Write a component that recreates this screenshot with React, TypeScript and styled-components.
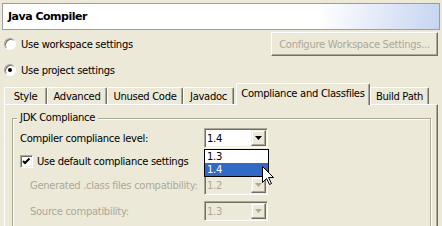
import styled, { createGlobalStyle } from "styled-components";

const GlobalStyle = createGlobalStyle`
  html, body {
    margin: 0;
    padding: 0;
    background: #ece9d8;
  }
  body {
    font-family: "DejaVu Sans", Verdana, sans-serif;
    font-size: 10px;
    letter-spacing: -0.3px;
    color: #000;
  }
`;

const tabs = [
  { label: "Style", width: 43 },
  { label: "Advanced", width: 60 },
  { label: "Unused Code", width: 76 },
  { label: "Javadoc", width: 51 },
  { label: "Compliance and Classfiles", width: 134, active: true },
  { label: "Build Path", width: 59 },
];

const App = () => {
  return (
    <Page>
      <GlobalStyle />
      <TitleBox>Java Compiler</TitleBox>

      <ScopeRow $height={24} $top={2}>
        <RadioLabel>
          <Radio />
          Use workspace settings
        </RadioLabel>
        <PushButton disabled>Configure Workspace Settings...</PushButton>
      </ScopeRow>
      <ScopeRow $height={20} $top={4}>
        <RadioLabel>
          <Radio $checked />
          Use project settings
        </RadioLabel>
      </ScopeRow>

      <TabStrip>
        {tabs.map((tab) => (
          <Tab key={tab.label} $width={tab.width} $active={tab.active}>
            {tab.label}
          </Tab>
        ))}
      </TabStrip>

      <Panel>
        <Group>
          <Legend>JDK Compliance</Legend>
          <GroupBody>
            <FieldRow $height={20}>
              <FieldLabel>Compiler compliance level:</FieldLabel>
              <Combo>
                <ComboText>1.4</ComboText>
                <ArrowButton>
                  <DownArrow />
                </ArrowButton>
                <DropList>
                  <DropItem>1.3</DropItem>
                  <DropItem $selected>1.4</DropItem>
                </DropList>
              </Combo>
            </FieldRow>
            <FieldRow $height={27}>
              <CheckLabel>
                <CheckBox>
                  <svg width="9" height="9" viewBox="0 0 9 9">
                    <path d="M1 4 L3 6 L7.5 1.5" stroke="#000" strokeWidth="2" fill="none" />
                  </svg>
                </CheckBox>
                Use default compliance settings
              </CheckLabel>
            </FieldRow>
            <FieldRow $height={20}>
              <FieldLabel $disabled $indent={10}>
                Generated .class files compatibility:
              </FieldLabel>
              <Combo $disabled>
                <ComboText>1.2</ComboText>
                <ArrowButton>
                  <DownArrow $disabled />
                </ArrowButton>
              </Combo>
            </FieldRow>
            <FieldRow $height={20} $top={6}>
              <FieldLabel $disabled $indent={10}>
                Source compatibility:
              </FieldLabel>
              <Combo $disabled>
                <ComboText>1.3</ComboText>
                <ArrowButton>
                  <DownArrow $disabled />
                </ArrowButton>
              </Combo>
            </FieldRow>
          </GroupBody>
        </Group>
      </Panel>

      <Cursor width="13" height="20" viewBox="0 0 13 20">
        <path
          d="M0.5 0.5 L0.5 16.5 L4.5 12.5 L7.5 18.5 L9.5 17.5 L6.5 11.5 L11.5 11.5 Z"
          fill="#fff"
          stroke="#000"
          strokeWidth="1"
        />
      </Cursor>
    </Page>
  );
};

const DownArrow = ({ $disabled }: { $disabled?: boolean }) => (
  <svg width="7" height="4" viewBox="0 0 7 4">
    <polygon points="0,0 7,0 3.5,4" fill={$disabled ? "#aca899" : "#000"} />
  </svg>
);

export default App;

const Page = styled.div`
  position: relative;
  width: 442px;
  height: 226px;
  overflow: hidden;
  background: #ece9d8;
`;

const TitleBox = styled.div`
  margin: 3px 2px 0;
  height: 25px;
  border: 1px solid #9d9da1;
  padding-left: 5px;
  display: flex;
  align-items: center;
  font-weight: bold;
  font-size: 11px;
  letter-spacing: -0.5px;
  background: linear-gradient(100deg, #fff 0%, #fff 72%, #c6d5f1 100%);
`;

const ScopeRow = styled.div<{ $height: number; $top: number }>`
  display: flex;
  align-items: center;
  justify-content: space-between;
  height: ${(p) => p.$height}px;
  margin-top: ${(p) => p.$top}px;
  padding: 0 4px 0 4px;
`;

const RadioLabel = styled.label`
  display: flex;
  align-items: center;
  gap: 5px;
`;

const Radio = styled.span<{ $checked?: boolean }>`
  position: relative;
  width: 12px;
  height: 12px;
  box-sizing: border-box;
  border-radius: 50%;
  border: 1px solid;
  border-color: #aca899 #fff #fff #aca899;
  box-shadow: inset 1px 1px 0 #716f64;
  background: #fff;

  &::after {
    content: "";
    display: ${(p) => (p.$checked ? "block" : "none")};
    position: absolute;
    left: 3px;
    top: 3px;
    width: 4px;
    height: 4px;
    border-radius: 50%;
    background: #000;
  }
`;

const PushButton = styled.button`
  width: 167px;
  height: 24px;
  box-sizing: border-box;
  padding: 0;
  border: 1px solid;
  border-color: #fff #716f64 #716f64 #fff;
  box-shadow: inset -1px -1px 0 #aca899;
  background: #ece9d8;
  color: #aca899;
  font: inherit;
  letter-spacing: inherit;
`;

const TabStrip = styled.div`
  position: relative;
  z-index: 1;
  display: flex;
  align-items: flex-end;
  height: 21px;
  margin-top: 3px;
  padding-left: 4px;
`;

const Tab = styled.div<{ $width: number; $active?: boolean }>`
  width: ${(p) => p.$width}px;
  height: ${(p) => (p.$active ? 22 : 17)}px;
  margin-left: ${(p) => (p.$active ? 2 : 0)}px;
  margin-bottom: ${(p) => (p.$active ? -1 : 0)}px;
  padding-bottom: ${(p) => (p.$active ? 2 : 0)}px;
  box-sizing: border-box;
  display: flex;
  align-items: center;
  justify-content: center;
  white-space: nowrap;
  background: #ece9d8;
  border-top: 1px solid #fff;
  border-left: 1px solid #fff;
  border-right: 1px solid #716f64;
  border-radius: 2px 2px 0 0;
  box-shadow: inset -1px 0 0 #aca899;
`;

const Panel = styled.div`
  margin: 0 4px;
  height: 122px;
  box-sizing: border-box;
  padding: 7px 6px 0 7px;
  border-top: 1px solid #fff;
  border-left: 1px solid #fff;
  border-right: 1px solid #716f64;
  box-shadow: inset -1px 0 0 #aca899;
`;

const Group = styled.fieldset`
  margin: 0;
  padding: 0 0 0 4px;
  min-width: 0;
  height: 130px;
  border: 1px solid #aca899;
  box-shadow: inset 1px 1px 0 #fff, 1px 1px 0 #fff;
`;

const Legend = styled.legend`
  padding: 0 3px;
  line-height: 12px;
  background: #ece9d8;
`;

const GroupBody = styled.div`
  padding: 4px 0 0 3px;
`;

const FieldRow = styled.div<{ $height: number; $top?: number }>`
  display: flex;
  align-items: center;
  height: ${(p) => p.$height}px;
  margin-top: ${(p) => p.$top ?? 0}px;
`;

const FieldLabel = styled.span<{ $disabled?: boolean; $indent?: number }>`
  width: 184px;
  flex-shrink: 0;
  box-sizing: border-box;
  padding-left: ${(p) => p.$indent ?? 0}px;
  color: ${(p) => (p.$disabled ? "#aca899" : "#000")};
  white-space: nowrap;
`;

const Combo = styled.div<{ $disabled?: boolean }>`
  position: relative;
  width: 64px;
  height: 20px;
  box-sizing: border-box;
  display: flex;
  align-items: center;
  border: 1px solid;
  border-color: #aca899 #fff #fff #aca899;
  box-shadow: inset 1px 1px 0 #716f64, inset -1px -1px 0 #f1efe2;
  background: ${(p) => (p.$disabled ? "#ece9d8" : "#fff")};
  color: ${(p) => (p.$disabled ? "#aca899" : "#000")};
`;

const ComboText = styled.span`
  flex: 1;
  padding-left: 2px;
`;

const ArrowButton = styled.span`
  width: 15px;
  height: 16px;
  margin-right: 1px;
  box-sizing: border-box;
  display: flex;
  align-items: center;
  justify-content: center;
  border: 1px solid;
  border-color: #f1efe2 #716f64 #716f64 #f1efe2;
  box-shadow: inset -1px -1px 0 #aca899, inset 1px 1px 0 #fff;
  background: #ece9d8;
`;

const DropList = styled.div`
  position: absolute;
  z-index: 2;
  left: -1px;
  top: calc(100% + 2px);
  width: 65px;
  box-sizing: border-box;
  border: 1px solid #000;
  background: #fff;
`;

const DropItem = styled.div<{ $selected?: boolean }>`
  height: 13px;
  line-height: 13px;
  padding-left: 2px;
  background: ${(p) => (p.$selected ? "#316ac5" : "#fff")};
  color: ${(p) => (p.$selected ? "#fff" : "#000")};
`;

const CheckLabel = styled.label`
  display: flex;
  align-items: center;
  gap: 4px;
`;

const CheckBox = styled.span`
  width: 13px;
  height: 13px;
  box-sizing: border-box;
  display: flex;
  align-items: center;
  justify-content: center;
  border: 1px solid;
  border-color: #aca899 #fff #fff #aca899;
  box-shadow: inset 1px 1px 0 #716f64, inset -1px -1px 0 #f1efe2;
  background: #fff;
`;

const Cursor = styled.svg`
  position: absolute;
  left: 262px;
  top: 166px;
  z-index: 3;
`;
